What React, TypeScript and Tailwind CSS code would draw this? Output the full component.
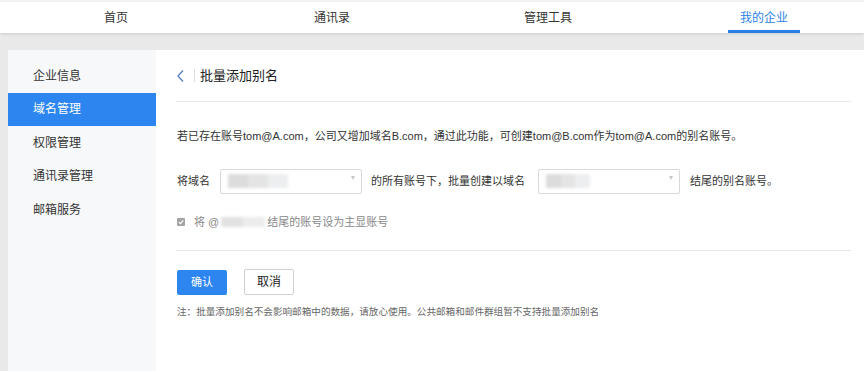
import React from 'react';

const tabs = ['首页', '通讯录', '管理工具', '我的企业'];
const menu = ['企业信息', '域名管理', '权限管理', '通讯录管理', '邮箱服务'];

const Blur: React.FC<{ w: string; tone?: string }> = ({ w, tone = 'bg-[#dcdcdc]' }) => (
  <span className={`inline-flex h-[14px] ${w} blur-[1.5px]`}>
    <span className={`h-full flex-1 ${tone}`}></span>
    <span className="h-full flex-1 bg-[#e4e4e4]"></span>
    <span className="h-full flex-1 bg-[#eceef0]"></span>
  </span>
);

const Select: React.FC<{ blur: string }> = ({ blur }) => (
  <div className="flex h-[25px] w-[142px] items-start justify-between rounded-[2px] border border-[#d9d9d9] bg-white pl-[7px] pr-[6px] pt-[4px]">
    <Blur w={blur} />
    <span className="mt-[2px] h-0 w-0 border-l-[2.5px] border-r-[2.5px] border-t-[4px] border-l-transparent border-r-transparent border-t-[#c8c8c8]"></span>
  </div>
);

export default function App() {
  return (
    <div className="flex h-[371px] w-[864px] flex-col overflow-hidden bg-[#e9e9e9] font-['Liberation_Sans','Noto_Sans_CJK_SC',sans-serif]">
      <div className="h-[2px] shrink-0 bg-[#f4f4f4]"></div>
      <nav className="flex h-[31px] shrink-0 overflow-hidden bg-white pl-[8px] shadow-[0_1px_3px_rgba(0,0,0,0.12)]">
        {tabs.map((t, i) => (
          <div key={t} className="flex w-[216px] shrink-0 justify-center">
            <div
              className={`flex h-full w-[72px] items-center justify-center border-y-[3px] border-t-transparent text-[12px] ${
                i === 3 ? 'border-b-[#2b7fe6] text-[#2b7fe6]' : 'border-b-transparent text-[#333]'
              }`}
            >
              {t}
            </div>
          </div>
        ))}
      </nav>

      <div className="mt-[17px] ml-[8px] flex flex-1">
        <aside className="w-[148px] shrink-0 bg-[#f7f8fa] pt-[9px]">
          {menu.map((m, i) => (
            <div
              key={m}
              className={`flex h-[33.5px] items-center pl-[25px] text-[12px] ${
                i === 1 ? 'bg-[#2d86ef] text-white' : 'text-[#333]'
              }`}
            >
              {m}
            </div>
          ))}
        </aside>

        <main className="flex-1 bg-white pl-[20px] pr-[13px]">
          <div className="flex h-[52px] items-center border-b border-[#e8e8e8] pl-[1px]">
            <svg width="7" height="12" viewBox="0 0 7 12" fill="none">
              <polyline points="6,0.5 1,6 6,11.5" stroke="#5a7cbf" strokeWidth="1.3" />
            </svg>
            <span className="ml-[10px] h-[13px] w-px bg-[#dcdcdc]"></span>
            <h1 className="ml-[5px] text-[13px] text-[#222]">批量添加别名</h1>
          </div>

          <p className="mt-[26px] pl-[1px] text-[11px] leading-[16px] text-[#333]">
            若已存在账号tom@A.com，公司又增加域名B.com，通过此功能，可创建tom@B.com作为tom@A.com的别名账号。
          </p>

          <div className="mt-[25px] flex items-center pl-[1px] text-[11px] text-[#333]">
            <span className="w-[43px]">将域名</span>
            <Select blur="w-[60px]" />
            <span className="ml-[9px] w-[167px]">的所有账号下，批量创建以域名</span>
            <Select blur="w-[44px]" />
            <span className="ml-[10px]">结尾的别名账号。</span>
          </div>

          <div className="mt-[20px] flex h-[16px] items-center pl-[1px] text-[11px] text-[#888]">
            <svg width="8" height="8" viewBox="0 0 8 8">
              <rect width="8" height="8" rx="1" fill="#a3a3a3" />
              <polyline points="1.8,4.1 3.4,5.6 6.3,2.3" fill="none" stroke="#fff" strokeWidth="1.2" />
            </svg>
            <span className="ml-[9px]">将 @</span>
            <span className="ml-[2px] inline-flex h-[10px] w-[44px] blur-[1.5px]">
              <span className="h-full flex-1 bg-[#e2e2e2]"></span>
              <span className="h-full flex-1 bg-[#ececec]"></span>
            </span>
            <span className="ml-[2px]">结尾的账号设为主显账号</span>
          </div>

          <div className="mt-[20px] border-t border-[#e5e5e5]"></div>

          <div className="mt-[18px] flex items-center gap-[17px] pl-[1px]">
            <button className="h-[25px] w-[50px] rounded-[2px] bg-[#2d86ef] text-[11px] text-white">确认</button>
            <button className="h-[26px] w-[50px] rounded-[2px] border border-[#d0d0d0] bg-white text-[12px] text-[#222]">取消</button>
          </div>

          <p className="mt-[10px] pl-[1px] text-[9.6px] leading-[14px] text-[#666]">
            注：批量添加别名不会影响邮箱中的数据，请放心使用。公共邮箱和邮件群组暂不支持批量添加别名
          </p>
        </main>
      </div>
    </div>
  );
}
